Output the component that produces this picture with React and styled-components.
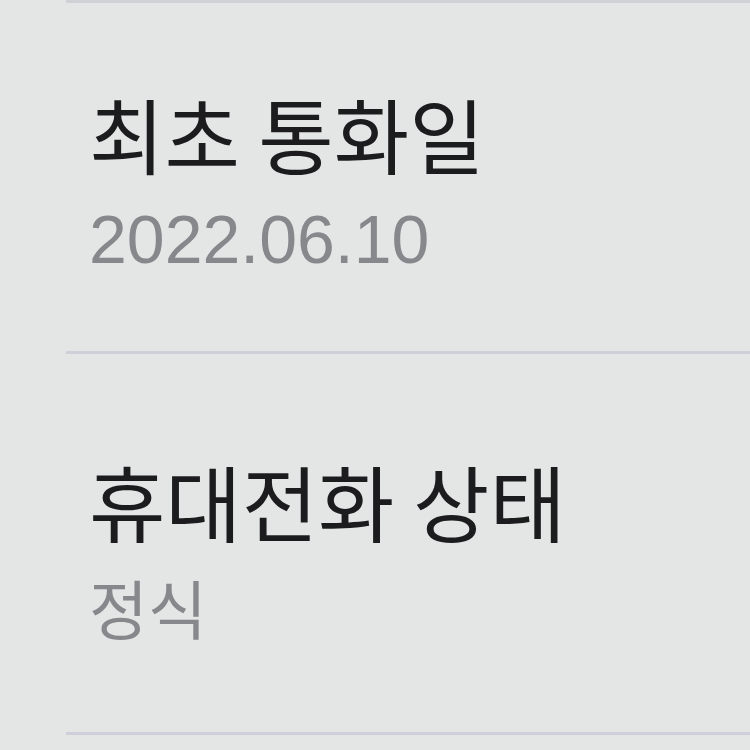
import React from "react";
import styled, { createGlobalStyle } from "styled-components";

const Global = createGlobalStyle`
  html, body { margin: 0; padding: 0; background: #e4e6e6; }
  body { width: 750px; height: 750px; overflow: hidden; }
`;

const Page = styled.div`
  width: 750px;
  height: 750px;
  background: #e4e6e6;
  overflow: hidden;
`;

const List = styled.div`
  margin-left: 66px;
  border-top: 3px solid #cfd1d6;
`;

const Row = styled.div`
  padding: ${(p) => p.$top}px 0 ${(p) => p.$bottom}px 23px;
  border-bottom: 3px solid #cdd0d8;
  display: flex;
  flex-direction: column;
  gap: ${(p) => p.$gap}px;
`;

const Title = styled.div`
  font-family: "Noto Sans CJK KR", "Noto Sans", sans-serif;
  font-size: ${(p) => p.$size}px;
  line-height: 1;
  color: #1c1c1e;
`;

const Value = styled.div`
  font-family: "Liberation Sans", "Noto Sans CJK KR", sans-serif;
  font-size: ${(p) => p.$size}px;
  line-height: 1;
  color: #86888b;
`;

export default function App() {
  return (
    <Page>
      <Global />
      <List>
        <Row $top={89} $bottom={78} $gap={31}>
          <Title $size={82}>최초 통화일</Title>
          <Value $size={68}>2022.06.10</Value>
        </Row>
        <Row $top={105} $bottom={88} $gap={38}>
          <Title $size={83}>휴대전화 상태</Title>
          <Value $size={64}>정식</Value>
        </Row>
      </List>
    </Page>
  );
}
